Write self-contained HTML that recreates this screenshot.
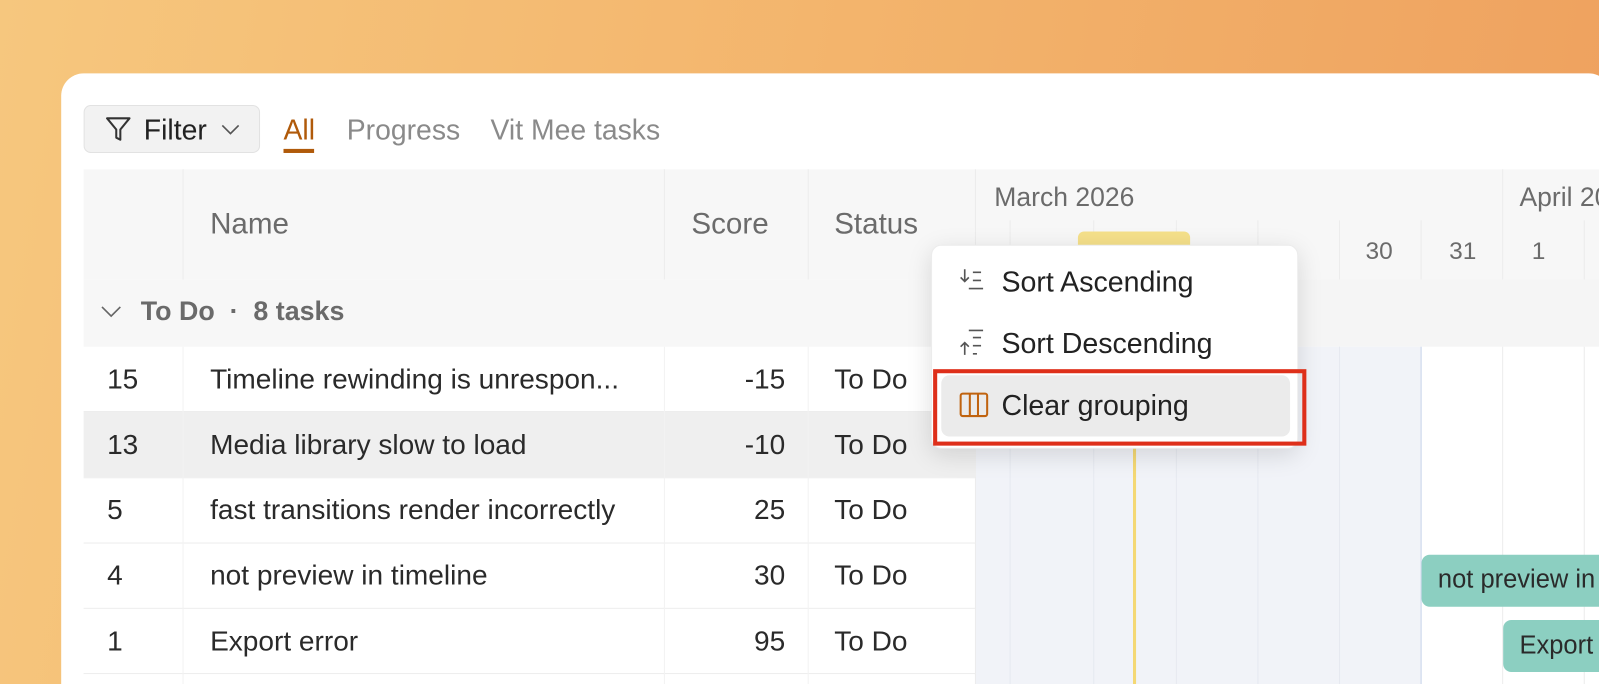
<!DOCTYPE html>
<html style="overflow:hidden;width:1599px;height:684px"><head><meta charset="utf-8"><style>
*{margin:0;padding:0;box-sizing:border-box}
body{width:1599px;height:684px;overflow:hidden;background:linear-gradient(100deg,#f6c77e 0%,#f3b46c 50%,#eea05e 100%);font-family:"Liberation Sans",sans-serif;position:relative}
.wrap{position:absolute;left:0;top:0;width:1568px;height:671px;transform:scale(1.0198);transform-origin:0 0;overflow:hidden}
.card{position:absolute;left:60px;top:72px;width:1520px;height:599px;background:#fff;border-radius:22px 22px 0 0;overflow:hidden}
.a{position:absolute}
.t{position:absolute;font-size:27.5px;color:#2a2a2a;white-space:nowrap;line-height:1}
.h{color:#6b6b6b}
.vl{position:absolute;width:1px;background:#ececec}
.hl{position:absolute;height:1px;background:#ededed}
</style></head><body>
<div class="wrap">
<div class="card">
<div class="a" style="left:22px;top:31px;width:173px;height:47px;background:#f2f2f2;border:1px solid #e2e2e2;border-radius:7px"></div>
<svg class="a" style="left:42px;top:41px" width="28" height="28" viewBox="0 0 28 28"><path d="M3 3H25L16 14V24L12 22V14Z" fill="none" stroke="#333" stroke-width="2" stroke-linejoin="round"/></svg>
<div class="t" style="left:81px;top:42px;color:#222;font-size:27.8px">Filter</div>
<svg class="a" style="left:155px;top:48px" width="22" height="14" viewBox="0 0 22 14"><path d="M3 3L11 11L19 3" fill="none" stroke="#555" stroke-width="1.6"/></svg>
<div class="t" style="left:218px;top:42px;color:#b05a0a;font-size:27.8px">All</div>
<div class="a" style="left:218px;top:74px;width:30px;height:4px;background:#b05a0a"></div>
<div class="t" style="left:280px;top:42px;color:#8a8a8a;font-size:27.8px">Progress</div>
<div class="t" style="left:421px;top:42px;color:#8a8a8a;font-size:27.8px">Vit Mee tasks</div>

<div class="a" style="left:22px;top:94px;width:1600px;height:108px;background:#f7f7f7"></div>
<div class="a" style="left:22px;top:202px;width:875px;height:66px;background:#f7f7f7"></div>
<div class="a" style="left:897px;top:202px;width:800px;height:66px;background:#f5f5f5"></div>
<div class="vl" style="left:119px;top:94px;height:108px"></div>
<div class="vl" style="left:591px;top:94px;height:108px"></div>
<div class="vl" style="left:732px;top:94px;height:108px"></div>
<div class="vl" style="left:896px;top:94px;height:505px"></div>
<div class="t h" style="left:146px;top:134px;font-size:29px">Name</div>
<div class="t h" style="left:618px;top:134px;font-size:29px">Score</div>
<div class="t h" style="left:758px;top:134px;font-size:29px">Status</div>
<div class="t h" style="left:915px;top:108px;font-size:26px">March 2026</div>
<div class="vl" style="left:1413px;top:94px;height:108px"></div>
<div class="t h" style="left:1430px;top:108px;font-size:26px">April 20</div>
<div class="vl" style="left:930px;top:144px;height:58px"></div>
<div class="vl" style="left:1012px;top:144px;height:58px"></div>
<div class="vl" style="left:1093px;top:144px;height:58px"></div>
<div class="vl" style="left:1173px;top:144px;height:58px"></div>
<div class="vl" style="left:1253px;top:144px;height:58px"></div>
<div class="vl" style="left:1333px;top:144px;height:58px"></div>
<div class="vl" style="left:1493px;top:144px;height:58px"></div>
<div class="a" style="left:997px;top:155px;width:110px;height:30px;background:#f5e08a;border-radius:6px"></div>
<div class="t h" style="left:1279px;top:163px;font-size:24px">30</div>
<div class="t h" style="left:1361px;top:163px;font-size:24px">31</div>
<div class="t h" style="left:1442px;top:163px;font-size:24px">1</div>
<svg class="a" style="left:38px;top:226px" width="22" height="14"><path d="M2 3L11 12L20 3" fill="none" stroke="#666" stroke-width="1.6"/></svg>
<div class="t" style="left:78px;top:220px;color:#6a6a6a;font-weight:bold;font-size:26.3px">To Do &nbsp;·&nbsp; 8 tasks</div>

<div class="a" style="left:897px;top:268px;width:436px;height:331px;background:#f1f3f8"></div>
<div class="a" style="left:1333px;top:268px;width:1px;height:331px;background:#c6d2ea"></div>
<div class="vl" style="left:930px;top:268px;height:331px;background:#e6e9f0"></div>
<div class="vl" style="left:1012px;top:268px;height:331px;background:#e6e9f0"></div>
<div class="vl" style="left:1093px;top:268px;height:331px;background:#e6e9f0"></div>
<div class="vl" style="left:1173px;top:268px;height:331px;background:#e6e9f0"></div>
<div class="vl" style="left:1253px;top:268px;height:331px;background:#e6e9f0"></div>
<div class="vl" style="left:1413px;top:268px;height:331px"></div>
<div class="vl" style="left:1493px;top:268px;height:331px"></div>
<div class="a" style="left:1051px;top:268px;width:3px;height:331px;background:#f4d874"></div>
<div class="a" style="left:1334px;top:472px;width:240px;height:51px;background:#8ccfc1;border-radius:8px"></div>
<div class="t" style="left:1350px;top:484px;font-size:25px">not preview in</div>
<div class="a" style="left:1414px;top:536px;width:200px;height:51px;background:#8ccfc1;border-radius:8px"></div>
<div class="t" style="left:1430px;top:549px;font-size:25px">Export</div>

<div class="a" style="left:22px;top:332px;width:875px;height:64px;background:#efefef"></div>
<div class="hl" style="left:22px;top:331px;width:875px"></div>
<div class="hl" style="left:22px;top:396px;width:875px"></div>
<div class="hl" style="left:22px;top:460px;width:875px"></div>
<div class="hl" style="left:22px;top:524px;width:875px"></div>
<div class="hl" style="left:22px;top:588px;width:875px"></div>
<div class="vl" style="left:119px;top:268px;height:331px;background:#f2f2f2"></div>
<div class="vl" style="left:591px;top:268px;height:331px;background:#f2f2f2"></div>
<div class="vl" style="left:732px;top:268px;height:331px;background:#f2f2f2"></div>

<div class="t" style="left:45px;top:286px">15</div><div class="t" style="left:146px;top:286px">Timeline rewinding is unrespon...</div><div class="t" style="left:600px;top:286px;width:110px;text-align:right">-15</div><div class="t" style="left:758px;top:286px">To Do</div>
<div class="t" style="left:45px;top:350px">13</div><div class="t" style="left:146px;top:350px">Media library slow to load</div><div class="t" style="left:600px;top:350px;width:110px;text-align:right">-10</div><div class="t" style="left:758px;top:350px">To Do</div>
<div class="t" style="left:45px;top:414px">5</div><div class="t" style="left:146px;top:414px">fast transitions render incorrectly</div><div class="t" style="left:600px;top:414px;width:110px;text-align:right">25</div><div class="t" style="left:758px;top:414px">To Do</div>
<div class="t" style="left:45px;top:478px">4</div><div class="t" style="left:146px;top:478px">not preview in timeline</div><div class="t" style="left:600px;top:478px;width:110px;text-align:right">30</div><div class="t" style="left:758px;top:478px">To Do</div>
<div class="t" style="left:45px;top:543px">1</div><div class="t" style="left:146px;top:543px">Export error</div><div class="t" style="left:600px;top:543px;width:110px;text-align:right">95</div><div class="t" style="left:758px;top:543px">To Do</div>

<div class="a" style="left:853px;top:168px;width:360px;height:200px;background:#fff;border-radius:10px;box-shadow:0 6px 24px rgba(0,0,0,.13);border:1px solid #ececec"></div>
<svg class="a" style="left:880px;top:190px" width="28" height="30" viewBox="0 0 28 30"><path d="M6 2V14M2 10L6 14L10 10" fill="none" stroke="#555" stroke-width="1.6"/><path d="M14 5H22M14 13H22M10 21H24" stroke="#555" stroke-width="1.6"/></svg>
<div class="t" style="left:922px;top:191px;color:#222;font-size:28px">Sort Ascending</div>
<svg class="a" style="left:880px;top:250px" width="28" height="30" viewBox="0 0 28 30"><path d="M6 26V14M2 18L6 14L10 18" fill="none" stroke="#555" stroke-width="1.6"/><path d="M10 2H24M14 9H22M14 17H22M14 25H18" stroke="#555" stroke-width="1.6"/></svg>
<div class="t" style="left:922px;top:251px;color:#222;font-size:28px">Sort Descending</div>
<div class="a" style="left:863px;top:296px;width:342px;height:60px;background:#ebebeb;border-radius:8px"></div>
<svg class="a" style="left:880px;top:312px" width="30" height="26" viewBox="0 0 30 26"><rect x="2" y="2" width="26" height="22" rx="2" fill="none" stroke="#c0630f" stroke-width="2"/><path d="M11 2V24M19 2V24" stroke="#c0630f" stroke-width="2"/></svg>
<div class="t" style="left:922px;top:312px;color:#222;font-size:28px">Clear grouping</div>
<div class="a" style="left:855px;top:290px;width:366px;height:75px;border:4px solid #de2f1a"></div>
</div>
</div>
</body></html>
